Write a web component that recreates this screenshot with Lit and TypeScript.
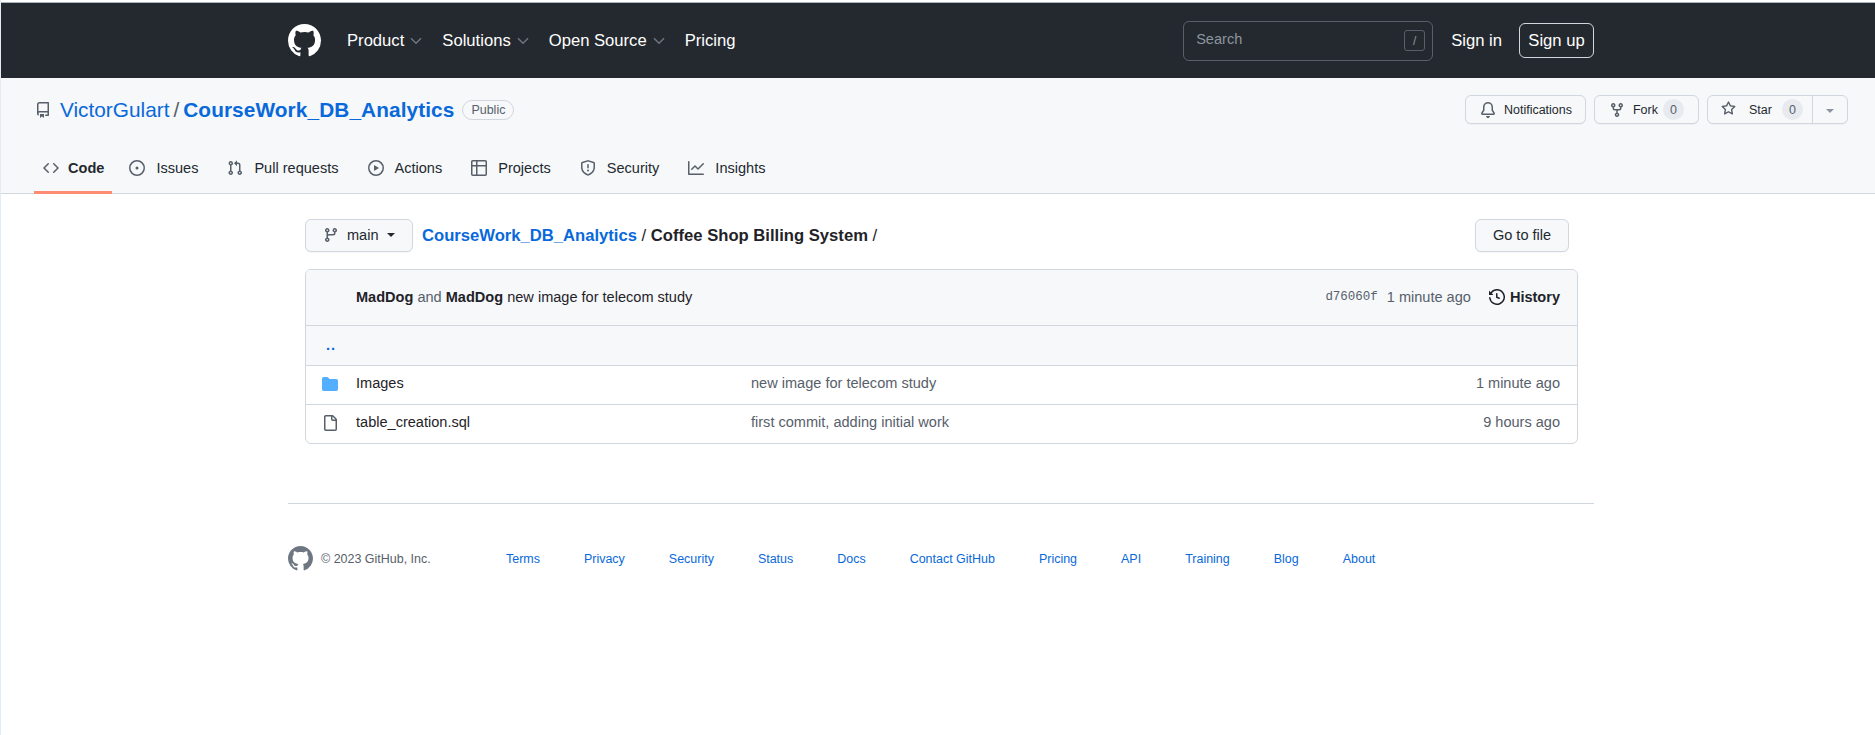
import { LitElement, html, svg, css } from "lit";
import { customElement } from "lit/decorators.js";

const MARK =
  "M8 0c4.42 0 8 3.58 8 8a8.013 8.013 0 0 1-5.45 7.59c-.4.08-.55-.17-.55-.38 0-.27.01-1.13.01-2.2 0-.75-.25-1.23-.54-1.48 1.78-.2 3.65-.88 3.65-3.95 0-.88-.31-1.59-.82-2.15.08-.2.36-1.02-.08-2.12 0 0-.67-.22-2.2.82-.64-.18-1.32-.27-2-.27-.68 0-1.36.09-2 .27-1.53-1.03-2.2-.82-2.2-.82-.44 1.1-.16 1.92-.08 2.12-.51.56-.82 1.28-.82 2.15 0 3.06 1.86 3.75 3.64 3.95-.23.2-.44.55-.51 1.07-.46.21-1.61.55-2.33-.66-.15-.24-.6-.83-1.23-.82-.67.01-.27.38.01.53.34.19.73.9.82 1.13.16.45.68 1.31 2.69.94 0 .67.01 1.3.01 1.49 0 .21-.15.45-.55.38A7.995 7.995 0 0 1 0 8c0-4.42 3.58-8 8-8Z";

const ICONS: Record<string, string> = {
  repo: "M2 2.5A2.5 2.5 0 0 1 4.5 0h8.75a.75.75 0 0 1 .75.75v12.5a.75.75 0 0 1-.75.75h-2.5a.75.75 0 0 1 0-1.5h1.75v-2h-8a1 1 0 0 0-.714 1.7.75.75 0 1 1-1.072 1.05A2.495 2.495 0 0 1 2 11.5Zm10.5-1h-8a1 1 0 0 0-1 1v6.708A2.486 2.486 0 0 1 4.5 9h8ZM5 12.25a.25.25 0 0 1 .25-.25h3.5a.25.25 0 0 1 .25.25v3.25a.25.25 0 0 1-.4.2l-1.45-1.087a.249.249 0 0 0-.3 0L5.4 15.7a.25.25 0 0 1-.4-.2Z",
  code: "m11.28 3.22 4.25 4.25a.75.75 0 0 1 0 1.06l-4.25 4.25a.749.749 0 0 1-1.275-.326.749.749 0 0 1 .215-.734L13.94 8l-3.72-3.72a.749.749 0 0 1 .326-1.275.749.749 0 0 1 .734.215Zm-6.56 0a.751.751 0 0 1 1.042.018.751.751 0 0 1 .018 1.042L2.06 8l3.72 3.72a.749.749 0 0 1-.326 1.275.749.749 0 0 1-.734-.215L.47 8.53a.75.75 0 0 1 0-1.06Z",
  issue: "M8 9.5a1.5 1.5 0 1 0 0-3 1.5 1.5 0 0 0 0 3Z M8 0a8 8 0 1 1 0 16A8 8 0 0 1 8 0ZM1.5 8a6.5 6.5 0 1 0 13 0 6.5 6.5 0 0 0-13 0Z",
  pull: "M1.5 3.25a2.25 2.25 0 1 1 3 2.122v5.256a2.251 2.251 0 1 1-1.5 0V5.372A2.25 2.25 0 0 1 1.5 3.25Zm5.677-.177L9.573.677A.25.25 0 0 1 10 .854V2.5h1A2.5 2.5 0 0 1 13.5 5v5.628a2.251 2.251 0 1 1-1.5 0V5a1 1 0 0 0-1-1h-1v1.646a.25.25 0 0 1-.427.177L7.177 3.427a.25.25 0 0 1 0-.354ZM3.75 2.5a.75.75 0 1 0 0 1.5.75.75 0 0 0 0-1.5Zm0 9.5a.75.75 0 1 0 0 1.5.75.75 0 0 0 0-1.5Zm8.25.75a.75.75 0 1 0 1.5 0 .75.75 0 0 0-1.5 0Z",
  play: "M8 0a8 8 0 1 1 0 16A8 8 0 0 1 8 0ZM1.5 8a6.5 6.5 0 1 0 13 0 6.5 6.5 0 0 0-13 0Zm4.879-2.773 4.264 2.559a.25.25 0 0 1 0 .428l-4.264 2.559A.25.25 0 0 1 6 10.559V5.442a.25.25 0 0 1 .379-.215Z",
  table: "M0 1.75C0 .784.784 0 1.75 0h12.5C15.216 0 16 .784 16 1.75v12.5A1.75 1.75 0 0 1 14.25 16H1.75A1.75 1.75 0 0 1 0 14.25ZM6.5 6.5v8h7.75a.25.25 0 0 0 .25-.25V6.5Zm8-1.5V1.75a.25.25 0 0 0-.25-.25H6.5V5Zm-13 1.5v7.75c0 .138.112.25.25.25H5v-8ZM5 5V1.5H1.75a.25.25 0 0 0-.25.25V5Z",
  shield: "M7.467.133a1.748 1.748 0 0 1 1.066 0l5.25 1.68A1.75 1.75 0 0 1 15 3.48V7c0 1.566-.32 3.182-1.303 4.682-.983 1.498-2.585 2.813-5.032 3.855a1.697 1.697 0 0 1-1.33 0c-2.447-1.042-4.049-2.357-5.032-3.855C1.32 10.182 1 8.566 1 7V3.48a1.75 1.75 0 0 1 1.217-1.667Zm.61 1.429a.25.25 0 0 0-.153 0l-5.25 1.68a.25.25 0 0 0-.174.238V7c0 1.358.275 2.666 1.057 3.86.784 1.194 2.121 2.34 4.366 3.297a.196.196 0 0 0 .154 0c2.245-.956 3.582-2.104 4.366-3.298C13.225 9.666 13.5 8.36 13.5 7V3.48a.251.251 0 0 0-.174-.237l-5.25-1.68ZM8.75 4.75v3a.75.75 0 0 1-1.5 0v-3a.75.75 0 0 1 1.5 0ZM9 10.5a1 1 0 1 1-2 0 1 1 0 0 1 2 0Z",
  graph: "M1.5 1.75V13.5h13.75a.75.75 0 0 1 0 1.5H.75a.75.75 0 0 1-.75-.75V1.75a.75.75 0 0 1 1.5 0Zm14.28 2.53-5.25 5.25a.75.75 0 0 1-1.06 0L7 7.06 4.28 9.78a.751.751 0 0 1-1.042-.018.751.751 0 0 1-.018-1.042l3.25-3.25a.75.75 0 0 1 1.06 0L10 7.94l4.72-4.72a.751.751 0 0 1 1.042.018.751.751 0 0 1 .018 1.042Z",
  bell: "M8 16c.9 0 1.7-.6 1.9-1.5.1-.3-.1-.5-.4-.5h-3c-.3 0-.5.2-.4.5.2.9 1 1.5 1.9 1.5ZM3 5a5 5 0 0 1 10 0v2.947c0 .05.015.098.042.139l1.703 2.555A1.519 1.519 0 0 1 13.482 13H2.518a1.516 1.516 0 0 1-1.263-2.36l1.703-2.554A.255.255 0 0 0 3 7.947Zm5-3.5A3.5 3.5 0 0 0 4.5 5v2.947c0 .346-.102.683-.294.97l-1.703 2.556a.017.017 0 0 0-.003.01l.001.006c0 .002.002.004.004.006l.006.004.007.001h10.964l.007-.001.006-.004.004-.006.001-.007a.017.017 0 0 0-.003-.01l-1.703-2.554a1.745 1.745 0 0 1-.294-.97V5A3.5 3.5 0 0 0 8 1.5Z",
  fork: "M5 5.372v.878c0 .414.336.75.75.75h4.5a.75.75 0 0 0 .75-.75v-.878a2.25 2.25 0 1 1 1.5 0v.878a2.25 2.25 0 0 1-2.25 2.25h-1.5v2.128a2.251 2.251 0 1 1-1.5 0V8.5h-1.5A2.25 2.25 0 0 1 3.5 6.25v-.878a2.25 2.25 0 1 1 1.5 0ZM5 3.25a.75.75 0 1 0-1.5 0 .75.75 0 0 0 1.5 0Zm6.75.75a.75.75 0 1 0 0-1.5.75.75 0 0 0 0 1.5Zm-3 8.75a.75.75 0 1 0-1.5 0 .75.75 0 0 0 1.5 0Z",
  star: "M8 .25a.75.75 0 0 1 .673.418l1.882 3.815 4.21.612a.75.75 0 0 1 .416 1.279l-3.046 2.97.719 4.192a.751.751 0 0 1-1.088.791L8 12.347l-3.766 1.98a.75.75 0 0 1-1.088-.79l.72-4.194L.818 6.374a.75.75 0 0 1 .416-1.28l4.21-.611L7.327.668A.75.75 0 0 1 8 .25Zm0 2.445L6.615 5.5a.75.75 0 0 1-.564.41l-3.097.45 2.24 2.184a.75.75 0 0 1 .216.664l-.528 3.084 2.769-1.456a.75.75 0 0 1 .698 0l2.77 1.456-.53-3.084a.75.75 0 0 1 .216-.664l2.24-2.183-3.096-.45a.75.75 0 0 1-.564-.41L8 2.694Z",
  branch: "M9.5 3.25a2.25 2.25 0 1 1 3 2.122V6A2.5 2.5 0 0 1 10 8.5H6a1 1 0 0 0-1 1v1.128a2.251 2.251 0 1 1-1.5 0V5.372a2.25 2.25 0 1 1 1.5 0v1.836A2.493 2.493 0 0 1 6 7h4a1 1 0 0 0 1-1v-.628A2.25 2.25 0 0 1 9.5 3.25Zm-6 0a.75.75 0 1 0 1.5 0 .75.75 0 0 0-1.5 0Zm8.25-.75a.75.75 0 1 0 0 1.5.75.75 0 0 0 0-1.5ZM4.25 12a.75.75 0 1 0 0 1.5.75.75 0 0 0 0-1.5Z",
  history: "m.427 1.927 1.215 1.215a8.002 8.002 0 1 1-1.6 5.685.75.75 0 1 1 1.493-.154 6.5 6.5 0 1 0 1.18-4.458l1.358 1.358A.25.25 0 0 1 3.896 6H.25A.25.25 0 0 1 0 5.75V2.104a.25.25 0 0 1 .427-.177ZM7.75 4a.75.75 0 0 1 .75.75v2.992l2.028.812a.75.75 0 0 1-.557 1.392l-2.5-1A.751.751 0 0 1 7 8.25v-3.5A.75.75 0 0 1 7.75 4Z",
  folder: "M1.75 1A1.75 1.75 0 0 0 0 2.75v10.5C0 14.216.784 15 1.75 15h12.5A1.75 1.75 0 0 0 16 13.25v-8.5A1.75 1.75 0 0 0 14.25 3H7.5a.25.25 0 0 1-.2-.1l-.9-1.2C6.07 1.26 5.55 1 5 1H1.75Z",
  file: "M2 1.75C2 .784 2.784 0 3.75 0h6.586c.464 0 .909.184 1.237.513l2.914 2.914c.329.328.513.773.513 1.237v9.586A1.75 1.75 0 0 1 13.25 16h-9.5A1.75 1.75 0 0 1 2 14.25Zm1.75-.25a.25.25 0 0 0-.25.25v12.5c0 .138.112.25.25.25h9.5a.25.25 0 0 0 .25-.25V6h-2.75A1.75 1.75 0 0 1 9 4.25V1.5Zm6.75.062V4.25c0 .138.112.25.25.25h2.688l-.011-.013-2.914-2.914-.013-.011Z",
};

const icon = (name: string, size = 16) => html`<svg class="icon" width=${size} height=${size} viewBox="0 0 16 16" fill="currentColor"><path d=${ICONS[name]}></path></svg>`;
const mark = (size: number) => html`<svg class="mark" width=${size} height=${size} viewBox="0 0 16 16" fill="currentColor"><path d=${MARK}></path></svg>`;
const chevron = html`<svg class="chev" width="12" height="8" viewBox="0 0 12 8" fill="none" stroke="currentColor" stroke-width="1.5">${svg`<path d="M1 1.2l5 5 5-5"></path>`}</svg>`;

const TABS = [
  ["code", "Code"],
  ["issue", "Issues"],
  ["pull", "Pull requests"],
  ["play", "Actions"],
  ["table", "Projects"],
  ["shield", "Security"],
  ["graph", "Insights"],
];
const FILES = [
  { icon: "folder", name: "Images", msg: "new image for telecom study", age: "1 minute ago" },
  { icon: "file", name: "table_creation.sql", msg: "first commit, adding initial work", age: "9 hours ago" },
];
const FOOTER_LINKS = ["Terms", "Privacy", "Security", "Status", "Docs", "Contact GitHub", "Pricing", "API", "Training", "Blog", "About"];

@customElement("app-root")
export class AppRoot extends LitElement {
  render() {
    return html`
      <header class="top">
        <div class="top-inner">
          ${mark(33)}
          <nav class="top-nav">
            <span>Product ${chevron}</span>
            <span>Solutions ${chevron}</span>
            <span>Open Source ${chevron}</span>
            <span>Pricing</span>
          </nav>
          <div class="search"><span>Search</span><kbd>/</kbd></div>
          <a class="signin">Sign in</a>
          <a class="signup">Sign up</a>
        </div>
      </header>

      <section class="repo-head">
        <div class="title-row">
          <div class="repo-title">
            <span class="repo-icon">${icon("repo")}</span>
            <a class="owner">VictorGulart</a><span class="sep">/</span><a class="name">CourseWork_DB_Analytics</a>
            <span class="public">Public</span>
          </div>
          <div class="actions">
            <div class="btn notif">${icon("bell")}<span>Notifications</span></div>
            <div class="btn fork">${icon("fork")}<span>Fork</span><b class="count">0</b></div>
            <div class="btn star">
              <div class="star-main">${icon("star", 15)}<span>Star</span><b class="count">0</b></div>
              <div class="star-caret"><i class="caret"></i></div>
            </div>
          </div>
        </div>
        <nav class="tabs">
          ${TABS.map(([ic, label], i) => html`<div class="tab ${i === 0 ? "active" : ""}">${icon(ic)}<span>${label}</span></div>`)}
        </nav>
      </section>

      <main class="main">
        <div class="path-row">
          <div class="branch">${icon("branch")}<span>main</span><i class="caret"></i></div>
          <div class="crumbs"><a>CourseWork_DB_Analytics</a> <span class="slash">/</span> <b>Coffee Shop Billing System</b> <span class="slash">/</span></div>
          <div class="goto">Go to file</div>
        </div>
        <div class="box">
          <div class="commit">
            <div class="commit-msg"><b>MadDog</b> <span class="and">and</span> <b>MadDog</b> new image for telecom study</div>
            <div class="commit-meta">
              <code>d76060f</code>
              <span class="ago">1 minute ago</span>
              <span class="history">${icon("history")}History</span>
            </div>
          </div>
          <div class="row up"><a>..</a></div>
          ${FILES.map(
            (f) => html`<div class="row">
              <span class="file-icon ${f.icon}">${icon(f.icon)}</span>
              <span class="file-name">${f.name}</span>
              <span class="file-msg">${f.msg}</span>
              <span class="file-age">${f.age}</span>
            </div>`
          )}
        </div>
      </main>

      <footer class="foot">
        <div class="foot-inner">
          <div class="copy">${mark(25)}<span>© 2023 GitHub, Inc.</span></div>
          <nav class="foot-links">${FOOTER_LINKS.map((l) => html`<a>${l}</a>`)}</nav>
        </div>
      </footer>
    `;
  }

  static styles = css`
    :host {
      display: block;
      min-height: 735px;
      background: #fff;
      font-family: "Liberation Sans", Arial, sans-serif;
      font-size: 14.56px;
      color: #1f2328;
      box-sizing: border-box;
      padding-top: 2px;
      border-left: 1px solid #e3ecf5;
    }
    svg {
      display: block;
      flex: none;
    }
    a {
      color: #0969da;
    }
    .top {
      background: #24292f;
      height: 76px;
      box-sizing: border-box;
      border-top: 1px solid #a9b4be;
      color: #fff;
    }
    .top-inner {
      margin-left: 287px;
      width: 1306px;
      height: 100%;
      display: flex;
      align-items: center;
    }
    .top-nav {
      display: flex;
      gap: 20px;
      margin-left: 26px;
      font-size: 16.64px;
      flex: 1;
    }
    .top-nav span {
      display: flex;
      align-items: center;
      gap: 6px;
    }
    .chev {
      color: #6e7681;
    }
    .search {
      width: 250px;
      height: 40px;
      box-sizing: border-box;
      border: 1px solid #57606a;
      border-radius: 6px;
      display: flex;
      align-items: center;
      justify-content: space-between;
      padding: 0 7px 0 12px;
      color: #8c959f;
    }
    .search span {
      margin-bottom: 4px;
    }
    .search kbd {
      width: 21px;
      height: 21px;
      box-sizing: border-box;
      border: 1px solid #57606a;
      border-radius: 3px;
      font: 12px "Liberation Sans", sans-serif;
      display: flex;
      align-items: center;
      justify-content: center;
    }
    .signin {
      color: #fff;
      font-size: 16.64px;
      margin-left: 18px;
    }
    .signup {
      color: #fff;
      font-size: 16.64px;
      margin-left: 17px;
      border: 1px solid #d0d7de;
      border-radius: 6px;
      height: 35px;
      box-sizing: border-box;
      width: 75px;
      display: flex;
      align-items: center;
      justify-content: center;
    }
    .repo-head {
      background: #f6f8fa;
      height: 116px;
      box-sizing: border-box;
      border-bottom: 1px solid #d0d7de;
      padding: 17px 27px 0 33px;
    }
    .title-row {
      display: flex;
      justify-content: space-between;
      align-items: flex-start;
      height: 29px;
    }
    .repo-title {
      display: flex;
      align-items: center;
      font-size: 20.8px;
      height: 30px;
    }
    .repo-icon {
      color: #57606a;
      margin: 0 9px 0 1px;
    }
    .sep {
      margin: 0 4px;
      color: #57606a;
    }
    .name {
      font-weight: 700;
      letter-spacing: 0.1px;
    }
    .public {
      margin-left: 8px;
      border: 1px solid #d0d7de;
      border-radius: 10px;
      font-size: 12.48px;
      color: #57606a;
      height: 20px;
      box-sizing: border-box;
      width: 52px;
      display: flex;
      align-items: center;
      justify-content: center;
    }
    .actions {
      display: flex;
      gap: 8px;
      font-size: 12.48px;
    }
    .btn {
      height: 29px;
      box-sizing: border-box;
      background: #f6f8fa;
      border: 1px solid #d0d7de;
      border-radius: 6px;
      display: flex;
      align-items: center;
      color: #24292f;
      box-shadow: 0 1px 0 rgba(31, 35, 40, 0.04);
    }
    .btn .icon {
      color: #57606a;
    }
    .notif {
      width: 121px;
      padding-left: 14px;
      gap: 8px;
    }
    .fork {
      width: 105px;
      padding-left: 14px;
      gap: 8px;
    }
    .star {
      width: 141px;
    }
    .star-main {
      display: flex;
      align-items: center;
      width: 105px;
      height: 100%;
      padding-left: 13px;
      gap: 13px;
      box-sizing: border-box;
      border-right: 1px solid #d0d7de;
    }
    .star-main .icon {
      margin-bottom: 3px;
    }
    .star-caret {
      flex: 1;
      display: flex;
      justify-content: center;
      color: #8c959f;
      padding-top: 3px;
    }
    .count {
      font-weight: 400;
      background: rgba(175, 184, 193, 0.2);
      border-radius: 11px;
      width: 21px;
      height: 21px;
      display: flex;
      align-items: center;
      justify-content: center;
      color: #57606a;
      margin-left: -3px;
    }
    .caret {
      display: block;
      width: 0;
      height: 0;
      border-style: solid;
      border-width: 4px 4px 0;
      border-color: currentColor transparent transparent;
    }
    .tabs {
      display: flex;
      margin-top: 24px;
      height: 47px;
    }
    .tab {
      display: flex;
      align-items: center;
      height: 46px;
      padding: 0 8px 6px;
      gap: 11px;
      margin-right: 13px;
      color: #24292f;
      box-sizing: border-box;
    }
    .tab .icon {
      color: #57606a;
    }
    .tab.active {
      font-weight: 700;
      gap: 9px;
      margin-right: 9px;
      padding: 0 8px 3px 9px;
      border-bottom: 3px solid #fd8c73;
    }
    .main {
      margin-left: 304px;
      width: 1273px;
    }
    .path-row {
      display: flex;
      align-items: center;
      margin-top: 25px;
      height: 33px;
    }
    .branch {
      width: 108px;
      height: 33px;
      box-sizing: border-box;
      background: #f6f8fa;
      border: 1px solid #d0d7de;
      border-radius: 6px;
      display: flex;
      align-items: center;
      padding: 0 0 2px 17px;
      gap: 8px;
      color: #24292f;
      box-shadow: 0 1px 0 rgba(31, 35, 40, 0.04);
    }
    .branch .icon {
      color: #57606a;
    }
    .crumbs {
      margin-left: 9px;
      font-size: 16.64px;
      flex: 1;
    }
    .crumbs a {
      font-weight: 700;
    }
    .goto {
      width: 94px;
      height: 33px;
      box-sizing: border-box;
      margin-right: 9px;
      padding-bottom: 2px;
      background: #f6f8fa;
      border: 1px solid #d0d7de;
      border-radius: 6px;
      display: flex;
      align-items: center;
      justify-content: center;
      color: #24292f;
      box-shadow: 0 1px 0 rgba(31, 35, 40, 0.04);
    }
    .box {
      margin-top: 17px;
      border: 1px solid #d0d7de;
      border-radius: 6px;
      overflow: hidden;
    }
    .commit {
      background: #f6f8fa;
      height: 55px;
      box-sizing: border-box;
      display: flex;
      align-items: center;
      justify-content: space-between;
      padding: 0 17px 2px 50px;
    }
    .commit-msg b {
      font-weight: 700;
    }
    .and {
      color: #57606a;
    }
    .commit-meta {
      display: flex;
      align-items: center;
      color: #57606a;
    }
    .commit-meta code {
      font: 12.48px "Liberation Mono", monospace;
      margin-right: 9px;
    }
    .history {
      display: flex;
      align-items: center;
      gap: 5px;
      margin-left: 18px;
      font-weight: 700;
      color: #1f2328;
    }
    .row {
      height: 39px;
      box-sizing: border-box;
      border-top: 1px solid #d0d7de;
      display: flex;
      align-items: center;
      padding: 0 17px 2px 16px;
    }
    .row.up {
      height: 40px;
      background: #f6f8fa;
    }
    .row.up a {
      margin-left: 4px;
      font-weight: 700;
      letter-spacing: 1px;
    }
    .file-icon {
      width: 34px;
      color: #57606a;
    }
    .file-icon.folder {
      color: #54aeff;
    }
    .file-name,
    .file-msg,
    .file-age {
      margin-bottom: 2px;
    }
    .file-name {
      width: 395px;
    }
    .file-msg {
      flex: 1;
      color: #57606a;
    }
    .file-age {
      color: #57606a;
    }
    .foot-inner {
      margin: 59px 0 0 287px;
      width: 1306px;
      border-top: 1px solid #d0d7de;
      padding-top: 42px;
      display: flex;
      align-items: center;
      font-size: 12.48px;
    }
    .copy {
      display: flex;
      align-items: center;
      gap: 8px;
      color: #57606a;
      width: 218px;
    }
    .copy .mark {
      color: #6e7781;
    }
    .foot-links {
      display: flex;
      gap: 44px;
    }
  `;
}
